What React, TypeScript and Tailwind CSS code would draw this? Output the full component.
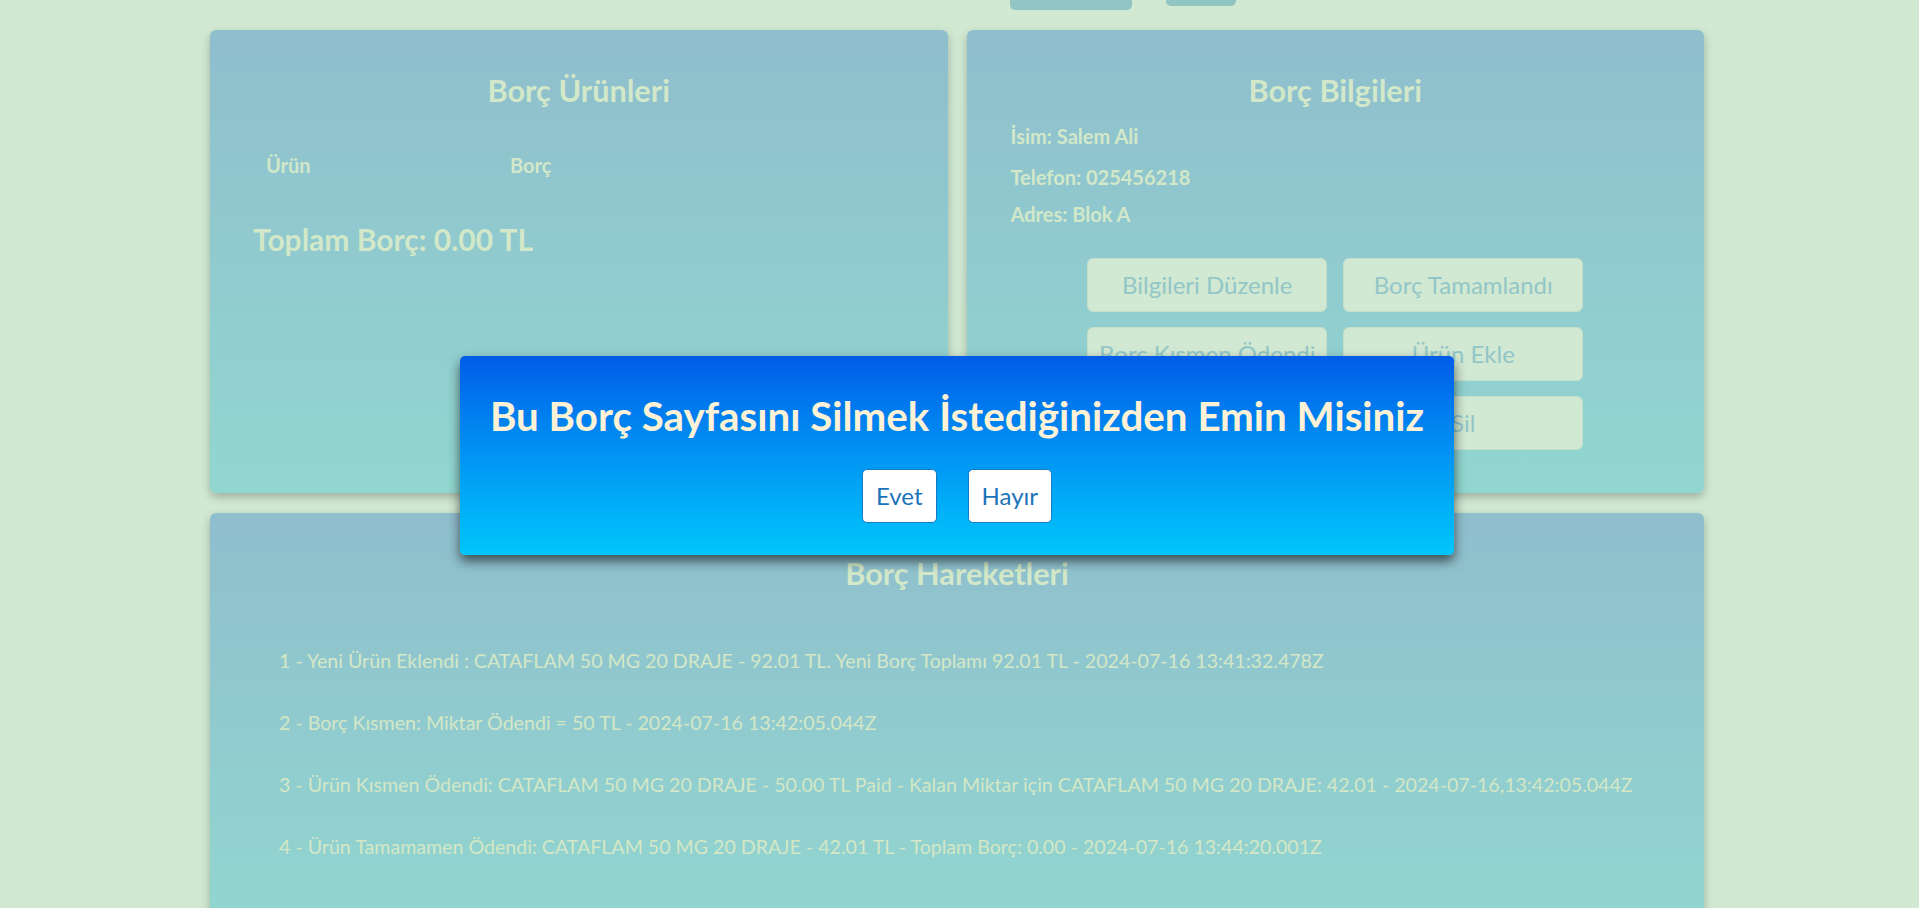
import React from "react";

const historyItems = [
  "1 - Yeni Ürün Eklendi : CATAFLAM 50 MG 20 DRAJE - 92.01 TL. Yeni Borç Toplamı 92.01 TL - 2024-07-16 13:41:32.478Z",
  "2 - Borç Kısmen: Miktar Ödendi = 50 TL - 2024-07-16 13:42:05.044Z",
  "3 - Ürün Kısmen Ödendi: CATAFLAM 50 MG 20 DRAJE - 50.00 TL Paid - Kalan Miktar için CATAFLAM 50 MG 20 DRAJE: 42.01 - 2024-07-16,13:42:05.044Z",
  "4 - Ürün Tamamamen Ödendi: CATAFLAM 50 MG 20 DRAJE - 42.01 TL - Toplam Borç: 0.00 - 2024-07-16 13:44:20.001Z",
];

const actions = ["Bilgileri Düzenle", "Borç Tamamlandı", "Borç Kısmen Ödendi", "Ürün Ekle", "Ürün Sil", "Sil"];

function App() {
  return (
    <div className="relative h-[908px] overflow-hidden bg-[#d1e9d3] font-['Lato',sans-serif]">
      {/* Header buttons (scrolled off the top) */}
      <div className="flex h-[30px] items-start gap-[34px] pl-[1010px]">
        <div className="h-[10px] w-[122px] rounded-b-[5px] bg-[#90c5c3]"></div>
        <div className="h-[6px] w-[70px] rounded-b-[5px] bg-[#90c5c3]"></div>
      </div>

      <div className="ml-[210px] w-[1494px]">
        <div className="grid grid-cols-2 gap-[19px]">
          {/* Borç Ürünleri */}
          <section className="h-[463px] rounded-[6px] bg-linear-to-b from-[#8fbecd] to-[#91d7d0] pt-[43px] text-[#d2e8c9] shadow-[0_4px_10px_rgba(0,0,0,0.25)]">
            <h2 className="text-center text-[30.7px] font-bold leading-[36px]">Borç Ürünleri</h2>
            <div className="mt-[44px] flex pl-[56px] text-[20px] font-bold leading-[24px]">
              <span className="w-[244px]">Ürün</span>
              <span>Borç</span>
            </div>
            <p className="mt-[45px] pl-[43px] text-[30px] font-bold leading-[35px]">Toplam Borç: 0.00 TL</p>
          </section>

          {/* Borç Bilgileri */}
          <section className="h-[463px] rounded-[6px] bg-linear-to-b from-[#8fbecd] to-[#91d7d0] pt-[43px] text-[#d2e8c9] shadow-[0_4px_10px_rgba(0,0,0,0.25)]">
            <h2 className="text-center text-[30.7px] font-bold leading-[36px]">Borç Bilgileri</h2>
            <div className="pl-[44px] text-[20px] font-bold leading-[24px]">
              <p className="mt-[15px]">İsim: Salem Ali</p>
              <p className="mt-[17px]">Telefon: 025456218</p>
              <p className="mt-[13px]">Adres: Blok A</p>
            </div>
            <div className="mt-[32px] grid grid-cols-[240px_240px] justify-center gap-x-[16px] gap-y-[15px]">
              {actions.map((label) => (
                <button
                  key={label}
                  className="h-[54px] rounded-[6px] border border-[#c3dfca] bg-[#d1e8d2] text-[24px] leading-none text-[#93c6c7]"
                >
                  {label}
                </button>
              ))}
            </div>
          </section>
        </div>

        {/* Borç Hareketleri */}
        <section className="mt-[20px] h-[420px] rounded-[6px] bg-linear-to-b from-[#8fbecd] to-[#91d7d0] pt-[43px] text-[#d2e8c9] shadow-[0_4px_10px_rgba(0,0,0,0.25)]">
          <h2 className="text-center text-[30.7px] font-bold leading-[36px]">Borç Hareketleri</h2>
          <ul className="mt-[57px] flex flex-col gap-[39px] pl-[69px] text-[19.6px] leading-[23px] text-[#d4e7c6]">
            {historyItems.map((item, idx) => (
              <li key={idx}>{item}</li>
            ))}
          </ul>
        </section>
      </div>

      {/* Confirm dialog */}
      <div className="absolute left-[460px] top-[356px] flex h-[199px] w-[994px] flex-col items-center rounded-[5px] bg-linear-to-b from-[#005ce8] to-[#00c7fb] pt-[36px] shadow-[0_6px_12px_rgba(0,0,0,0.6)]">
        <h2 className="text-[40.3px] font-bold leading-[48px] text-[#fdf1d6]">
          Bu Borç Sayfasını Silmek İstediğinizden Emin Misiniz
        </h2>
        <div className="mt-[29px] flex gap-[31px]">
          <button className="h-[54px] rounded-[5px] border border-[#1a78c2] bg-white px-[13px] text-[24px] leading-none text-[#1b74ba]">
            Evet
          </button>
          <button className="h-[54px] rounded-[5px] border border-[#1a78c2] bg-white px-[13px] text-[24px] leading-none text-[#1b74ba]">
            Hayır
          </button>
        </div>
      </div>
    </div>
  );
}

export default App;
